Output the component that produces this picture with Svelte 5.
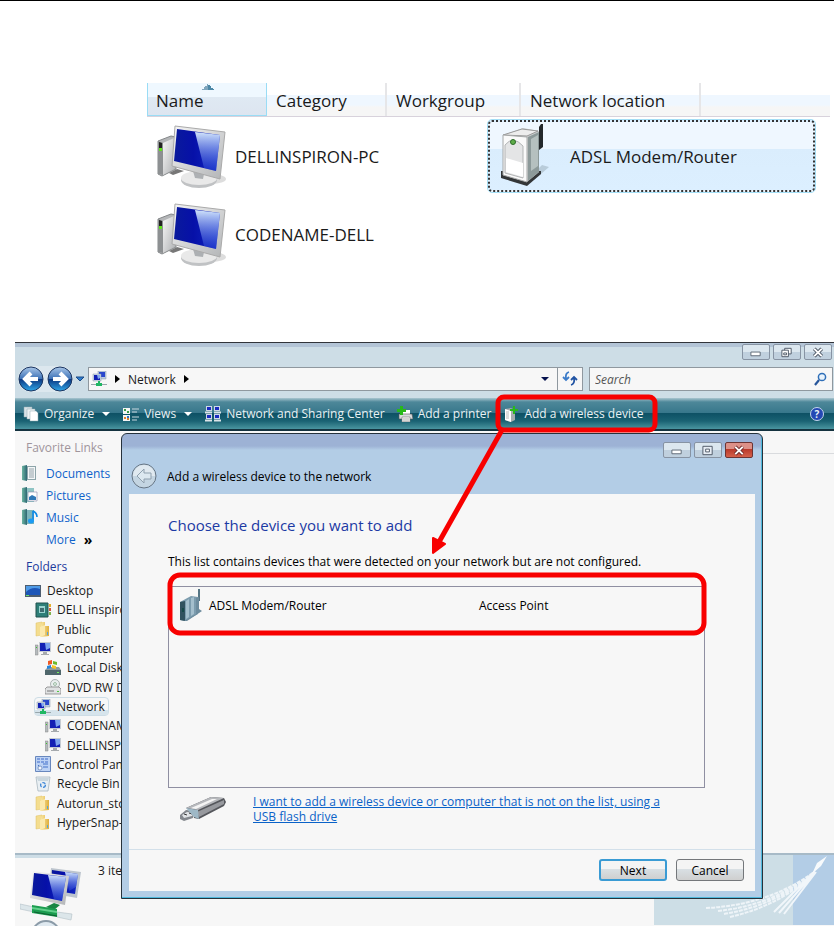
<script>
	const columns = ['Name', 'Category', 'Workgroup', 'Network location'];

	const devices = [
		{ name: 'DELLINSPIRON-PC', icon: 'pc' },
		{ name: 'ADSL Modem/Router', icon: 'router', selected: true },
		{ name: 'CODENAME-DELL', icon: 'pc' }
	];

	const tools = [
		{ label: 'Organize', icon: 'pages', menu: true },
		{ label: 'Views', icon: 'views', menu: true },
		{ label: 'Network and Sharing Center', icon: 'sharing' },
		{ label: 'Add a printer', icon: 'printer' },
		{ label: 'Add a wireless device', icon: 'wireless' }
	];

	const favorites = [
		{ label: 'Documents', icon: 'documents' },
		{ label: 'Pictures', icon: 'pictures' },
		{ label: 'Music', icon: 'music' }
	];

	const folders = [
		{ label: 'Desktop', icon: 'desktop', level: 0 },
		{ label: 'DELL inspiron', icon: 'user', level: 1 },
		{ label: 'Public', icon: 'folder', level: 1 },
		{ label: 'Computer', icon: 'computer', level: 1 },
		{ label: 'Local Disk (C:)', icon: 'disk', level: 2 },
		{ label: 'DVD RW Drive', icon: 'dvd', level: 2 },
		{ label: 'Network', icon: 'network', level: 1, current: true },
		{ label: 'CODENAME-DELL', icon: 'computer', level: 2 },
		{ label: 'DELLINSPIRON', icon: 'computer', level: 2 },
		{ label: 'Control Panel', icon: 'control', level: 1 },
		{ label: 'Recycle Bin', icon: 'bin', level: 1 },
		{ label: 'Autorun_sto', icon: 'folder', level: 1 },
		{ label: 'HyperSnap-6', icon: 'folder', level: 1 }
	];
</script>

{#snippet icon(name, size)}
	<svg class="icon {size}" aria-hidden="true"><use href="#{name}" /></svg>
{/snippet}

<svg class="sprite" aria-hidden="true">
	<defs>
		<linearGradient id="screen" x1="0" y1="0" x2="1" y2="0">
			<stop offset="0" stop-color="#0a1a9c" />
			<stop offset="0.42" stop-color="#0610a8" />
			<stop offset="1" stop-color="#1128c4" />
		</linearGradient>
		<linearGradient id="shine" x1="0" y1="0" x2="0" y2="1">
			<stop offset="0" stop-color="#dcefff" stop-opacity="0.95" />
			<stop offset="1" stop-color="#3b5ee6" stop-opacity="0.3" />
		</linearGradient>
		<linearGradient id="metal" x1="0" y1="0" x2="1" y2="1">
			<stop offset="0" stop-color="#f6f6f6" />
			<stop offset="1" stop-color="#b2b4b6" />
		</linearGradient>
		<linearGradient id="orb" x1="0" y1="0" x2="0" y2="1">
			<stop offset="0" stop-color="#a9c6e8" />
			<stop offset="0.48" stop-color="#4074b8" />
			<stop offset="0.5" stop-color="#0b357f" />
			<stop offset="1" stop-color="#2fa6e8" />
		</linearGradient>
		<linearGradient id="gold" x1="0" y1="0" x2="1" y2="0">
			<stop offset="0" stop-color="#f9e7a4" />
			<stop offset="1" stop-color="#dfae3c" />
		</linearGradient>
		<linearGradient id="book" x1="0" y1="0" x2="1" y2="0">
			<stop offset="0" stop-color="#6db5a2" />
			<stop offset="1" stop-color="#2d6672" />
		</linearGradient>
	</defs>

	<symbol id="pc" viewBox="0 0 70 66">
		<ellipse cx="54" cy="56" rx="15" ry="5" fill="#ddd" />
		<path d="M1 18 14 13 19 14 19 46 5 53 1 51Z" fill="#b4b6b8" stroke="#85888a" />
		<path d="M6 20 17 15V46L6 52Z" fill="url(#metal)" />
		<path d="M1 18 6 20V52L1 51Z" fill="#8d9092" />
		<path d="M2 19 5 20V25H2Z" fill="#222" />
		<path d="M2 25H5V28H2Z" fill="#5ee31b" />
		<path d="M12 50 20 46 27 48 16 52Z" fill="#777" />
		<ellipse cx="42" cy="57" rx="18" ry="8" fill="#c0c2c4" />
		<ellipse cx="42" cy="55" rx="18" ry="7" fill="#e9e9e9" />
		<path d="M36 48 47 51 46 56 38 55Z" fill="#adb0b3" />
		<path d="M18 3 68 9 63 56 15 43Z" fill="url(#metal)" stroke="#aaa" />
		<path d="M20 6 63 12 59 48 17 38Z" fill="url(#screen)" />
		<path d="M38 9 63 12 59 48 47 45Z" fill="url(#shine)" />
	</symbol>

	<symbol id="router" viewBox="0 0 50 66">
		<path d="M34 57 49 44 42 42 30 54Z" fill="#b9ccda" />
		<path d="M39 4 41 1H43V24L39 27Z" fill="#24282b" />
		<path d="M1 55 27 63 41 51V48H1Z" fill="#333638" />
		<path d="M3 12 23 5 39 8V49L27 59 3 52Z" fill="#c9cccd" />
		<path d="M3 12 22 6 38 8 27 13Z" fill="#ededed" stroke="#999" />
		<path d="M3 12 27 14V59L3 52Z" fill="#fafafa" stroke="#a6a8a8" />
		<path d="M5 22Q13 12 23 23V55L5 50Z" fill="#e4e5e6" stroke="#b3b5b6" />
		<path d="M6 35 23 40V54L6 49Z" fill="#fff" />
		<path d="M28 14 39 9V49L28 58Z" fill="#8c9999" />
		<path d="M31 16 38 12V43L31 48Z" fill="#b5c0bf" />
		<circle cx="13" cy="19" r="2.5" fill="#5fae49" stroke="#2c6b29" />
	</symbol>

	<symbol id="pages" viewBox="0 0 16 16">
		<path d="M1 1H9V11H1Z" fill="#d8e2e6" stroke="#93a9b0" stroke-width="0.5" />
		<path d="M4 3H12V13H4Z" fill="#eef2f4" stroke="#93a9b0" stroke-width="0.5" />
		<path d="M7 5H13L15 7V15H7Z" fill="#fff" stroke="#93a9b0" stroke-width="0.5" />
	</symbol>
	<symbol id="views" viewBox="0 0 16 16">
		<path d="M0 2H7V8H0ZM0 9H7V15H0Z" fill="#f4f4f4" />
		<path d="M1 3H3V5H1ZM4 5H6V7H4Z" fill="#3a9d47" />
		<path d="M1 11H3V13H1ZM4 12H6V14H4Z" fill="#df7d26" />
		<path d="M4 10H6V12H4Z" fill="#316fc4" />
		<path d="M9 3H16M9 6H14M9 11H16M9 14H14" stroke="#c8d8df" />
	</symbol>
	<symbol id="sharing" viewBox="0 0 16 16">
		<path d="M1 0H7V5H1ZM9 0H15V5H9ZM1 8H7V13H1ZM9 8H15V13H9Z" fill="#cfd8e8" />
		<path d="M2 1H6V4H2ZM10 1H14V4H10ZM2 9H6V12H2ZM10 9H14V12H10Z" fill="#1a2cc0" />
		<path d="M0 6.5H7M9 6.5H16M0 14.5H7M9 14.5H16" stroke="#dbe4e8" stroke-width="2" />
	</symbol>
	<symbol id="printer" viewBox="0 0 16 16">
		<path d="M5 4H13V8H5Z" fill="#fff" />
		<path d="M2 8H15L16 13H2Z" fill="#d6dadc" stroke="#555" stroke-width="0.6" />
		<path d="M5 11H13V16H5Z" fill="#fff" stroke="#777" stroke-width="0.6" />
		<path d="M6 13H12M6 15H12" stroke="#888" stroke-width="0.7" />
		<path d="M3 0H6V3H9V6H6V9H3V6H0V3H3Z" fill="#28b91a" />
	</symbol>
	<symbol id="wireless" viewBox="0 0 16 16">
		<path d="M2 3 8 2 12 4V14L8 16 2 14Z" fill="#a7acae" />
		<path d="M2 3 8 5V16L2 14Z" fill="#fff" />
		<path d="M3 5H6V13H3Z" fill="#ddd" />
		<path d="M10 0H12V3H15V5H12V8H10V5H7V3H10Z" fill="#28b91a" />
	</symbol>

	<symbol id="documents" viewBox="0 0 16 16">
		<path d="M0 1 5 0V16L0 15Z" fill="url(#book)" />
		<path d="M5 1H14V15H5Z" fill="#8da4a9" />
		<path d="M6 2H13V14H6Z" fill="#f4f7f8" />
		<path d="M7 4H12M7 6H12M7 8H12M7 10H12M7 12H12" stroke="#7d8d94" stroke-width="0.8" />
	</symbol>
	<symbol id="pictures" viewBox="0 0 16 16">
		<path d="M0 1 5 0V16L0 15Z" fill="url(#book)" />
		<path d="M5 1H12V15H5Z" fill="#8fc4c4" />
		<path d="M6 5H15V14H6Z" fill="#fff" stroke="#88a" stroke-width="0.6" />
		<path d="M7 10 10 8 14 10V13H7Z" fill="#2f79b7" />
	</symbol>
	<symbol id="music" viewBox="0 0 16 16">
		<path d="M0 1 5 0V16L0 15Z" fill="url(#book)" />
		<path d="M5 1H12V15H5Z" fill="#7cb4ba" />
		<path d="M11 2V11" stroke="#0d8ae6" stroke-width="1.6" />
		<path d="M11 2Q15 4 15 8" fill="none" stroke="#0d8ae6" stroke-width="1.6" />
		<ellipse cx="9" cy="12" rx="3" ry="2.4" fill="#1c9bf3" />
	</symbol>

	<symbol id="desktop" viewBox="0 0 16 16">
		<path d="M0 2H16V14H0Z" fill="#4d5d70" />
		<path d="M1 3H15V12H1Z" fill="#1d56b8" />
		<path d="M1 9Q7 3 15 6V3H1Z" fill="#4f9be6" />
		<path d="M1 12H4V13H1Z" fill="#6ddd6d" />
	</symbol>
	<symbol id="user" viewBox="0 0 16 16">
		<path d="M1 1H13V15H1Z" fill="#2e7f78" stroke="#20524f" />
		<path d="M4 4H10V11H4Z" fill="#9bd3cf" />
		<path d="M5 6H9V10H5Z" fill="#3f6c70" />
		<path d="M14 2H16V5H14Z" fill="#e4b12d" />
		<path d="M14 6H16V9H14Z" fill="#d05a3c" />
		<path d="M14 10H16V13H14Z" fill="#7fb44c" />
	</symbol>
	<symbol id="folder" viewBox="0 0 16 16">
		<path d="M1 2 7 1V14L1 15Z" fill="#f4dd8f" stroke="#dfbf63" stroke-width="0.5" />
		<path d="M7 1H10V5H14V15L6 16V5Z" fill="url(#gold)" />
		<path d="M5 6 10 4V14L5 16Z" fill="#fbe9ad" />
		<path d="M12 11H13V14H12Z" fill="#58a5d9" />
	</symbol>
	<symbol id="computer" viewBox="0 0 16 16">
		<path d="M0 4H3V14H0Z" fill="#b5babd" stroke="#888" stroke-width="0.5" />
		<path d="M1 6H2V7H1Z" fill="#39c92a" />
		<path d="M4 1H16V11H4Z" fill="#c5cbd2" />
		<path d="M5 2H15V10H5Z" fill="#1220b4" />
		<path d="M10 2H15V7L11 9Z" fill="#7ba4ee" />
		<path d="M8 11H12V13H14V14H6V13H8Z" fill="#a6aaae" />
	</symbol>
	<symbol id="disk" viewBox="0 0 16 16">
		<path d="M0 10 3 7H14L16 10V15H0Z" fill="#8f999e" />
		<path d="M0 10H16V15H0Z" fill="#4f666b" />
		<path d="M12 12H14V13H12Z" fill="#72f05b" />
		<path d="M3 1 7 0V4L3 5Z" fill="#ef5a24" />
		<path d="M8 1 12 2V5L8 4Z" fill="#6dbb2c" />
		<path d="M2 6 6 5V8L2 9Z" fill="#2785d9" />
		<path d="M7 5 11 6V9L7 8Z" fill="#f6c326" />
	</symbol>
	<symbol id="dvd" viewBox="0 0 16 16">
		<circle cx="10" cy="5" r="4.5" fill="#e9eeee" stroke="#909898" stroke-width="0.7" />
		<circle cx="10" cy="5" r="1.4" fill="#fff" stroke="#6c9b76" stroke-width="0.7" />
		<path d="M0 10 2 8H14L16 10V15H0Z" fill="#e0e2e3" stroke="#777" stroke-width="0.7" />
		<path d="M2 12H9" stroke="#777" />
		<path d="M12 12H14V13H12Z" fill="#4fc93f" />
	</symbol>
	<symbol id="network" viewBox="0 0 16 16">
		<path d="M7 0H15V8H7Z" fill="#bccbe0" stroke="#8794a8" stroke-width="0.5" />
		<path d="M8 1H14V6H8Z" fill="#2a47cd" />
		<path d="M2 3H10V10H2Z" fill="#d0dae8" stroke="#8794a8" stroke-width="0.5" />
		<path d="M3 4H9V9H3Z" fill="#1220b4" />
		<path d="M6 4H9V7L7 8Z" fill="#84a9f0" />
		<path d="M7 10H9V12H11V15H5V12H7Z" fill="#1fb763" />
		<path d="M0 13H5V14H0ZM11 13H16V14H11Z" fill="#98a6ab" />
	</symbol>
	<symbol id="control" viewBox="0 0 16 16">
		<path d="M0.5 0.5H15.5V15.5H0.5Z" fill="#bcd2f4" stroke="#6887bd" />
		<path d="M2 3H14M2 6H14" stroke="#3f6bc9" stroke-dasharray="3 1" />
		<path d="M3 9 6 12M8 8H13M8 11H13" stroke="#4472c9" />
		<circle cx="5" cy="12" r="2" fill="#f2f6fd" stroke="#4b6ba3" stroke-width="0.6" />
	</symbol>
	<symbol id="bin" viewBox="0 0 16 16">
		<path d="M1 1H15L13 15H3Z" fill="#e9eff3" stroke="#a9b7c0" stroke-width="0.8" />
		<path d="M2 2H14L13 5H3Z" fill="#cad7de" />
		<circle cx="8" cy="9" r="2.4" fill="none" stroke="#3c86d8" stroke-width="1.3" stroke-dasharray="3.4 1.4" />
	</symbol>

	<symbol id="modem" viewBox="0 0 24 34">
		<path d="M19 0H21V12H19Z" fill="#557584" />
		<path d="M1 13 12 7 19 8V25L6 32 1 31Z" fill="#7c9cae" />
		<path d="M1 13 6 12V32L1 31Z" fill="#31525f" />
		<path d="M3 19H5V23H3Z" fill="#164949" />
		<path d="M7 12 10 10V28L7 30ZM12 9 15 8V25L12 27Z" fill="#a4bfcd" />
		<path d="M17 9 20 8V20L23 22 8 32H5L17 25Z" fill="#6d8c9e" />
	</symbol>
	<symbol id="usb" viewBox="0 0 48 26">
		<path d="M1 19 7 14 16 15 14 22 5 25 1 23Z" fill="#83878d" />
		<path d="M3 19 8 16 15 17 13 20 5 22Z" fill="#dfe2e5" />
		<path d="M5 18 8 19M10 17 13 18" stroke="#333" />
		<path d="M7 12 32 1 45 2 47 6 45 10 20 23 15 22V15Z" fill="#55575c" />
		<path d="M7 12 32 1 45 2 19 14Z" fill="#b6b8bc" />
		<path d="M12 12 33 3 38 3 17 13Z" fill="#f4f4f4" />
		<path d="M18 16 45 4V8L20 21Z" fill="#97999e" />
		<path d="M7 12 19 14 20 23 15 21Z" fill="#9eb8c6" />
	</symbol>
	<symbol id="lan" viewBox="0 0 62 56">
		<path d="M31 0 61 4 57 30 29 25Z" fill="#bdc5ce" />
		<path d="M32 2 58 6 55 26 31 22Z" fill="url(#screen)" />
		<path d="M45 4 58 6 56 19 49 23Z" fill="url(#shine)" />
		<path d="M13 3 49 8 45 37 10 30Z" fill="url(#metal)" />
		<path d="M14 5 46 9 42 33 12 27Z" fill="url(#screen)" />
		<path d="M28 7 46 9 42 33 34 31Z" fill="url(#shine)" />
		<path d="M0 36 14 39V44L0 41Z" fill="#dce6ea" stroke="#b1bfc6" stroke-width="0.6" />
		<path d="M37 44 52 46 51 52 37 49Z" fill="#dce6ea" stroke="#b1bfc6" stroke-width="0.6" />
		<path d="M26 39 34 35 40 37 34 42Z" fill="#198643" />
		<path d="M12 37 37 41V49L12 45Z" fill="#1c9d50" />
		<path d="M12 39 37 43V45L12 41Z" fill="#62cf8b" />
		<path d="M14 44 37 48" stroke="#0d5f31" />
	</symbol>
</svg>

<main>
	<section class="listing">
		<div class="columns">
			{#each columns as column, i}
				<button class="column" class:sorted={i === 0}>{column}</button>
			{/each}
		</div>
		<div class="tiles">
			{#each devices as device}
				<div class="tile" class:selected={device.selected}>
					{@render icon(device.icon, device.icon === 'pc' ? 'large' : 'tall')}
					<span>{device.name}</span>
				</div>
			{/each}
		</div>
	</section>

	<section class="window">
		<div class="caption">
			<button aria-label="Minimize">
				<svg viewBox="0 0 28 14"><path d="M8.5 6.5H18.5V10.5H8.5Z" fill="#fff" stroke="#5b6673" /></svg>
			</button>
			<button aria-label="Restore">
				<svg viewBox="0 0 28 14"><path d="M11.5 2.5H18.5V8.5H11.5Z" fill="#fff" stroke="#4b5563" /><path d="M8.5 4.5H15.5V11.5H8.5Z" fill="#fff" stroke="#4b5563" /><path d="M10.5 7.5H13.5V9.5H10.5Z" fill="none" stroke="#4b5563" /></svg>
			</button>
			<button aria-label="Close">
				<svg viewBox="0 0 28 14"><path d="M10 3 18 11M18 3 10 11" stroke="#4b5563" stroke-width="4" /><path d="M10 3 18 11M18 3 10 11" stroke="#fff" stroke-width="2" /></svg>
			</button>
		</div>

		<div class="nav">
			<div class="orbs">
				<button aria-label="Back">
					<svg viewBox="0 0 26 26"><circle cx="13" cy="13" r="12" fill="url(#orb)" stroke="#1b3560" /><path d="M20 13H7M13 7 7 13 13 19" fill="none" stroke="#fff" stroke-width="4" /></svg>
				</button>
				<button aria-label="Forward">
					<svg viewBox="0 0 26 26"><circle cx="13" cy="13" r="12" fill="url(#orb)" stroke="#1b3560" /><path d="M6 13H19M13 7 19 13 13 19" fill="none" stroke="#fff" stroke-width="4" /></svg>
				</button>
			</div>
			<button class="recent" aria-label="Recent pages">
				<svg viewBox="0 0 10 6"><path d="M1 1H9L5 5Z" fill="#2f7fd0" stroke="#1c4a86" /></svg>
			</button>
			<div class="address">
				{@render icon('network', 'small')}
				<svg class="chevron" viewBox="0 0 5 8"><path d="M0 0 5 4 0 8Z" /></svg>
				<span>Network</span>
				<svg class="chevron" viewBox="0 0 5 8"><path d="M0 0 5 4 0 8Z" /></svg>
				<button class="drop" aria-label="Previous locations">
					<svg viewBox="0 0 8 4"><path d="M0 0H8L4 4Z" fill="#06124f" /></svg>
				</button>
				<button class="refresh" aria-label="Refresh">
					<svg viewBox="0 0 16 16"><path d="M7 1Q3 2 4 8M1 6 4 9 7 6" fill="none" stroke="#3c7cc9" stroke-width="1.8" /><path d="M9 14Q13 13 12 7M9 9 12 6 15 9" fill="none" stroke="#2154a4" stroke-width="1.8" /></svg>
				</button>
			</div>
			<label class="search">
				<input type="text" placeholder="Search" aria-label="Search" />
				<svg viewBox="0 0 14 14"><circle cx="9" cy="5" r="3.6" fill="#e9f3fc" stroke="#2f6fb8" stroke-width="1.5" /><path d="M6 8 2 13" stroke="#27569b" stroke-width="2.2" /></svg>
			</label>
		</div>

		<div class="toolbar">
			{#each tools as tool}
				<button class="tool">
					{@render icon(tool.icon, 'small')}
					<span>{tool.label}</span>
					{#if tool.menu}
						<svg class="arrow" viewBox="0 0 8 4"><path d="M0 0H8L4 4Z" fill="#fff" /></svg>
					{/if}
				</button>
			{/each}
			<button class="help" aria-label="Help">?</button>
		</div>

		<div class="content">
			<aside>
				<h3 class="faded">Favorite Links</h3>
				<nav>
					{#each favorites as item}
						<a href="#{item.icon}">{@render icon(item.icon, 'small')}{item.label}</a>
					{/each}
					<a class="more" href="#more">More <b>»</b></a>
				</nav>
				<h3>Folders</h3>
				<ul>
					{#each folders as folder}
						<li class="level{folder.level}">
							<span class="node" class:current={folder.current}>
								{@render icon(folder.icon, 'small')}{folder.label}
							</span>
						</li>
					{/each}
				</ul>
			</aside>
			<div class="files"></div>
		</div>

		<div class="details">
			{@render icon('lan', 'lan')}
			<span>3 items</span>
			<svg class="ring" viewBox="0 0 30 30"><circle cx="15" cy="15" r="14" fill="#dfe9f0" stroke="#8b9ba8" stroke-width="2" /></svg>
			<svg class="swoosh" viewBox="0 0 180 70">
				<path d="M0 0H139V70H0Z" fill="#cddee6" />
				<path d="M52 53Q115 50 160 17M64 56Q120 50 161 17M70 59Q124 50 161 17M76 62Q128 50 161 17" fill="none" stroke="#eef4f8" stroke-width="2" stroke-dasharray="4 1" />
				<path d="M120 57 160 17M125 58 161 17M130 59 162 17" fill="none" stroke="#f1f6fa" stroke-width="2" />
				<path d="M158 19 163 8 173 1 167 11Z" fill="#f7fafc" />
			</svg>
		</div>

		<div class="dialog" role="dialog" aria-labelledby="wizard-title">
			<div class="caption">
				<button aria-label="Minimize dialog">
					<svg viewBox="0 0 28 14"><path d="M8.5 6.5H18.5V10.5H8.5Z" fill="#fff" stroke="#5b6673" /></svg>
				</button>
				<button aria-label="Maximize dialog">
					<svg viewBox="0 0 28 14"><path d="M8.5 2.5H18.5V11.5H8.5Z" fill="#e7edf4" stroke="#4b5563" /><path d="M11.5 5.5H15.5V8.5H11.5Z" fill="#fff" stroke="#4b5563" /></svg>
				</button>
				<button class="close" aria-label="Close dialog">
					<svg viewBox="0 0 28 14"><path d="M10 3 18 11M18 3 10 11" stroke="#6d2a2a" stroke-width="4" /><path d="M10 3 18 11M18 3 10 11" stroke="#fff" stroke-width="2" /></svg>
				</button>
			</div>
			<div class="wizard">
				<button class="back" aria-label="Previous step">
					<svg viewBox="0 0 26 26"><circle cx="13" cy="13" r="12" fill="#c4d5e2" stroke="#667584" /><path d="M2 13A11 11 0 0 1 24 13Z" fill="#e0e9f0" /><path d="M13 6V10H20V16H13V20L6 13Z" fill="#dce8f0" stroke="#8fa0ae" /></svg>
				</button>
				<span id="wizard-title">Add a wireless device to the network</span>
			</div>
			<div class="body">
				<div class="step">
					<h2>Choose the device you want to add</h2>
					<p>This list contains devices that were detected on your network but are not configured.</p>
					<div class="box">
						<div class="found">
							{@render icon('modem', 'modem')}
							<span>ADSL Modem/Router</span>
							<span>Access Point</span>
						</div>
					</div>
					<div class="flash">
						{@render icon('usb', 'usb')}
						<a href="#usb">I want to add a wireless device or computer that is not on the list, using a USB flash drive</a>
					</div>
				</div>
				<footer>
					<button class="next">Next</button>
					<button>Cancel</button>
				</footer>
			</div>
		</div>

		<svg class="marks" viewBox="0 0 819 584" width="819" height="584" aria-hidden="true">
			<rect x="483" y="54" width="157" height="33" rx="6" />
			<rect x="155" y="232" width="534" height="58" rx="10" />
			<path d="M487 87 424 199" />
			<path class="head" d="M418 210 418 195 430 201Z" />
		</svg>
	</section>
</main>

<style>
	:global(body) {
		background: #fff;
		font-family: 'Open Sans', 'Noto Sans', sans-serif;
		font-size: 12px;
		color: #1a1a1a;
	}
	main {
		box-sizing: border-box;
		height: 100vh;
		border-top: 1px solid #000;
		display: flex;
		flex-direction: column;
		overflow: hidden;
	}
	button {
		font: inherit;
		color: inherit;
		padding: 0;
		border: 0;
		background: none;
		white-space: nowrap;
	}
	svg {
		display: block;
		flex: none;
	}
	.sprite {
		position: absolute;
		width: 0;
		height: 0;
	}
	.small {
		width: 16px;
		height: 16px;
	}
	.large {
		width: 70px;
		height: 66px;
	}
	.tall {
		width: 50px;
		height: 66px;
	}

	/* network listing */
	.listing {
		margin: 82px 4px 0 147px;
		font-size: 17px;
	}
	.columns {
		display: grid;
		grid-template-columns: 120px 120px 134px 180px 1fr;
		height: 33px;
		border-bottom: 1px solid #d8d2dc;
		background: linear-gradient(#fff 12px, #eff7ff 12px, #eff7ff 22px, #f6f6f6 24px);
	}
	.column {
		text-align: left;
		padding: 2px 0 0 9px;
		border-right: 2px solid #e6e6e8;
	}
	.sorted {
		padding-left: 8px;
		border: solid #9adcf5;
		border-width: 0 1px 1px;
		background:
			linear-gradient(135deg, transparent 50%, #7fa6bd 50%) 54px 1px / 6px 6px no-repeat,
			linear-gradient(225deg, transparent 50%, #4d88a6 50%) 60px 1px / 6px 6px no-repeat,
			linear-gradient(#eff8ff 14px, #dfe9f3 14px, #dde5f0);
	}
	.tiles {
		display: grid;
		grid-template-columns: 341px 327px;
		row-gap: 6px;
		padding-top: 3px;
	}
	.tile {
		box-sizing: border-box;
		display: flex;
		align-items: center;
		gap: 8px;
		height: 72px;
		padding-left: 10px;
	}
	.selected {
		gap: 20px;
		border: 2px dotted #333;
		border-radius: 4px;
		outline: 1px solid #a4def5;
		background: linear-gradient(#eff7ff 40%, #daedfd 40%, #dcefff);
	}

	/* explorer window */
	.window {
		position: relative;
		flex: 1;
		min-height: 0;
		margin: 72px 0 0 15px;
		display: flex;
		flex-direction: column;
		border-top: 1px solid #31343a;
		background: linear-gradient(#b3c4d6 4px, #cddde6 4px);
	}
	.caption {
		display: flex;
		justify-content: flex-end;
		gap: 3px;
		padding: 1px 2px 0 0;
	}
	.caption button {
		width: 28px;
		height: 16px;
		box-sizing: border-box;
		border: 1px solid #8793a3;
		border-radius: 2px;
		background: linear-gradient(#dce7ef 50%, #c0d0de 50%);
	}
	.caption svg {
		width: 26px;
		height: 13px;
	}
	.caption .close {
		border-color: #6c3434;
		background: linear-gradient(#dc9088 45%, #b9392b 45%, #d5614b);
	}
	.nav {
		display: flex;
		align-items: center;
		height: 36px;
		padding: 1px 1px 1px 3px;
	}
	.orbs {
		display: flex;
		gap: 3px;
		border-radius: 14px;
		background: #dce7ee;
	}
	.orbs svg {
		width: 26px;
		height: 26px;
	}
	.recent svg {
		width: 10px;
		height: 6px;
		margin: 0 3px 0 2px;
	}
	.address {
		flex: 1;
		display: flex;
		align-items: center;
		gap: 8px;
		height: 22px;
		padding-left: 2px;
		border: 1px solid #8f989f;
		background: #f7f7f7;
	}
	.chevron {
		width: 5px;
		height: 8px;
	}
	.drop {
		margin-left: auto;
	}
	.drop svg {
		width: 8px;
		height: 4px;
	}
	.refresh {
		height: 22px;
		padding: 0 4px;
		border-left: 1px solid #8f989f;
	}
	.refresh svg {
		width: 16px;
		height: 16px;
	}
	.search {
		display: flex;
		align-items: center;
		width: 242px;
		height: 22px;
		margin-left: 6px;
		border: 1px solid #8f989f;
		background: #f7f7f7;
	}
	.search input {
		flex: 1;
		min-width: 0;
		border: 0;
		padding: 0 5px;
		background: none;
		font: inherit;
		font-style: italic;
	}
	.search input::placeholder {
		color: #555;
		opacity: 1;
	}
	.search svg {
		width: 14px;
		height: 14px;
		margin-right: 5px;
	}
	.toolbar {
		display: flex;
		align-items: center;
		gap: 12px;
		height: 31px;
		padding: 0 10px 0 8px;
		border-bottom: 2px solid #14323f;
		background: linear-gradient(#a9c5d0, #4d8799 4px, #37778b 15px, #0d5064 15px, #1a6273 23px, #4a95a0);
		color: #e9f1f3;
		text-shadow: 0 1px 2px #062c38;
	}
	.tool {
		display: flex;
		align-items: center;
		gap: 5px;
	}
	.arrow {
		width: 8px;
		height: 4px;
		margin: 0 1px 0 3px;
	}
	.help {
		width: 14px;
		height: 14px;
		margin-left: auto;
		border: 1px solid #c4d5ee;
		border-radius: 50%;
		background: #2448b4;
		font-size: 10px;
		font-weight: bold;
		line-height: 12px;
	}

	.content {
		display: flex;
		height: 422px;
		background: #f7f7f7;
	}
	aside {
		width: 180px;
		display: flex;
		flex-direction: column;
		padding-bottom: 21px;
	}
	h3 {
		margin: 0;
		padding: 8px 0 5px 11px;
		font-size: 12px;
		font-weight: normal;
		line-height: 18px;
		color: #1c3a9c;
	}
	.faded {
		color: #a0959c;
	}
	nav a {
		display: flex;
		align-items: center;
		gap: 8px;
		height: 22px;
		padding-left: 7px;
		color: #0f63cb;
		text-decoration: none;
	}
	nav .more {
		padding-left: 31px;
	}
	.more b {
		color: #000;
		font-size: 14px;
	}
	ul {
		flex: 1;
		display: flex;
		flex-direction: column;
		margin: 0;
		padding: 0;
		list-style: none;
	}
	li {
		flex: 1;
		display: flex;
		align-items: center;
		padding-left: 10px;
	}
	.level1 {
		padding-left: 20px;
	}
	.level2 {
		padding-left: 30px;
	}
	.node {
		display: flex;
		align-items: center;
		gap: 6px;
		padding-right: 3px;
		white-space: nowrap;
	}
	.current {
		border-radius: 3px;
		outline: 1px solid #cddde6;
		background: linear-gradient(#f7f7f7 70%, #d6e4ec 70%);
	}
	.files {
		flex: 1;
		height: 22px;
		border-bottom: 1px solid #d9dbde;
	}
	.details {
		position: relative;
		flex: 1;
		display: flex;
		align-items: flex-start;
		gap: 16px;
		padding: 7px 0 0 5px;
		border-top: 2px solid #a7bac7;
		background: linear-gradient(#cddde6 3px, #f7f7f7 3px);
	}
	.lan {
		width: 62px;
		height: 56px;
		margin-top: 6px;
	}
	.ring {
		position: absolute;
		left: 16px;
		top: 65px;
		width: 30px;
		height: 30px;
	}
	.swoosh {
		position: absolute;
		right: 0;
		top: 0;
		width: 180px;
		height: 70px;
		background: #b3cde6;
	}

	/* wizard on top of the explorer */
	.dialog {
		position: absolute;
		top: 90px;
		left: 106px;
		right: 71px;
		box-sizing: border-box;
		height: 466px;
		display: flex;
		flex-direction: column;
		padding: 0 7px 7px;
		border: 1px solid #26323c;
		border-radius: 6px 6px 0 0;
		box-shadow: inset -1px -1px #4fb8dc;
		background: linear-gradient(#9db2d5 12px, #b3cde6 16px);
		color: #000;
	}
	.dialog .caption {
		padding: 8px 2px 0 0;
	}
	.wizard {
		display: flex;
		align-items: center;
		gap: 10px;
		height: 36px;
		padding-left: 2px;
	}
	.back svg {
		width: 26px;
		height: 26px;
	}
	.body {
		flex: 1;
		display: flex;
		flex-direction: column;
		background: #f7f7f7;
	}
	.step {
		flex: 1;
		padding: 18px 50px 0 39px;
	}
	h2 {
		margin: 0 0 16px;
		font-size: 15px;
		font-weight: normal;
		line-height: 26px;
		color: #1c3aa4;
	}
	p {
		margin: 0 0 16px;
		line-height: 16px;
		white-space: nowrap;
	}
	.box {
		height: 200px;
		border: 1px solid #8f8fa2;
	}
	.found {
		display: grid;
		grid-template-columns: 30px 270px 1fr;
		align-items: center;
		height: 37px;
		padding-left: 10px;
	}
	.modem {
		width: 24px;
		height: 34px;
	}
	.flash {
		display: flex;
		align-items: center;
		gap: 26px;
		padding: 6px 30px 0 11px;
		line-height: 15px;
	}
	.usb {
		width: 48px;
		height: 26px;
	}
	.flash a {
		color: #0a62c8;
	}
	footer {
		display: flex;
		justify-content: flex-end;
		gap: 9px;
		padding: 9px 11px 10px;
		border-top: 1px solid #d3e0ea;
	}
	footer button {
		box-sizing: border-box;
		width: 68px;
		height: 22px;
		border: 1px solid #74777b;
		border-radius: 3px;
		background: linear-gradient(#f4f4f4 45%, #d9e0e4 45%, #cfcfcf);
	}
	footer .next {
		border: 2px solid #3a9bd4;
	}

	.marks {
		position: absolute;
		left: 0;
		top: 0;
		fill: none;
		stroke: #f80000;
		stroke-width: 5;
		pointer-events: none;
	}
	.head {
		fill: #f80000;
		stroke-width: 2;
		stroke-linejoin: round;
	}
</style>
